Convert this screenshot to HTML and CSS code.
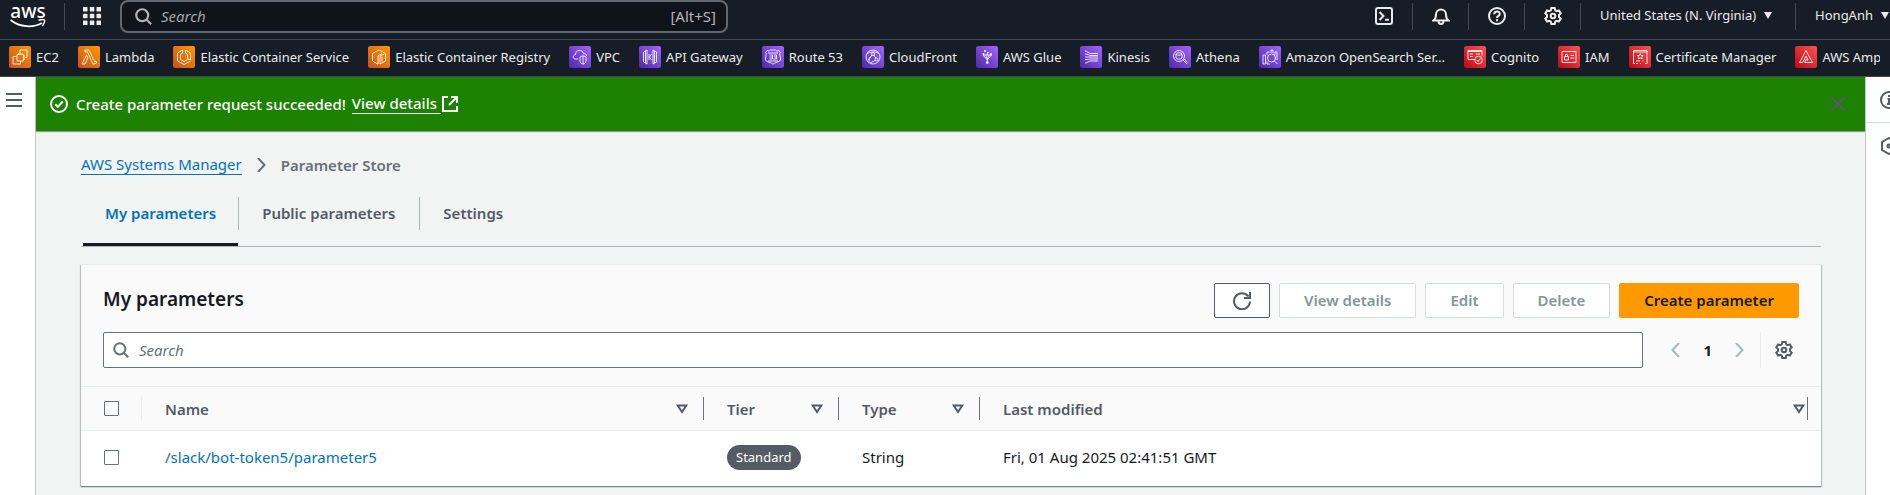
FILE: index.html
```html
<!DOCTYPE html>
<html lang="en">
<head>
<meta charset="utf-8">
<title>Parameter Store - AWS Systems Manager</title>
<link rel="stylesheet" href="styles.css">
</head>
<body>
<svg class="sprite" aria-hidden="true">
  <defs>
    <linearGradient id="orange" x1="0" y1="1" x2="1" y2="0"><stop offset="0" stop-color="#c8511b"/><stop offset="1" stop-color="#ff9900"/></linearGradient>
    <linearGradient id="purple" x1="0" y1="1" x2="1" y2="0"><stop offset="0" stop-color="#4d27a8"/><stop offset="1" stop-color="#a166ff"/></linearGradient>
    <linearGradient id="red" x1="0" y1="1" x2="1" y2="0"><stop offset="0" stop-color="#bd0816"/><stop offset="1" stop-color="#ff5252"/></linearGradient>
  </defs>
  <symbol id="search" viewBox="0 0 16 16"><circle cx="6.800" cy="6.800" r="5.600"/><path d="M10.800 10.800 15.200 15.200"/></symbol>
  <symbol id="gear" viewBox="0 0 18 18"><path d="M7.300 1h3.400l.5 2.300 1.500.9 2.200-.8 1.800 3L15 8v2l1.700 1.600-1.800 3-2.200-.8-1.500.9-.5 2.300H7.300l-.5-2.300-1.500-.9-2.200.8-1.800-3L3 10V8L1.300 6.400l1.800-3 2.200.8 1.500-.9z"/><circle cx="9" cy="9" r="2.300"/></symbol>
  <symbol id="sort" viewBox="0 0 12 10"><path d="M1.700 1.500h8.600L6 8z"/></symbol>
</svg>

<header class="top">
  <div class="bar">
    <a class="logo" href="#" aria-label="AWS home">
      <span class="logo-text">aws</span>
      <svg class="smile" viewBox="0 0 36 9"><path d="M.5 1C10 8.500 23 9 32 4" fill="none" stroke="#fff" stroke-width="1.800"/><path d="M28.500 1.200c3-.8 5.600-.8 6 0s-.4 3.800-2.400 5.800" fill="none" stroke="#fff" stroke-width="1.400"/></svg>
    </a>
    <span class="rule"></span>
    <button class="icon-btn apps" aria-label="Services">
      <svg viewBox="0 0 18 18" width="18" height="18" fill="#ebebf0"><rect width="4.500" height="4.500" rx=".6"/><rect x="6.800" width="4.500" height="4.500" rx=".6"/><rect x="13.500" width="4.500" height="4.500" rx=".6"/><rect y="6.800" width="4.500" height="4.500" rx=".6"/><rect x="6.800" y="6.800" width="4.500" height="4.500" rx=".6"/><rect x="13.500" y="6.800" width="4.500" height="4.500" rx=".6"/><rect y="13.500" width="4.500" height="4.500" rx=".6"/><rect x="6.800" y="13.500" width="4.500" height="4.500" rx=".6"/><rect x="13.500" y="13.500" width="4.500" height="4.500" rx=".6"/></svg>
    </button>
    <label class="global-search">
      <svg class="line" width="17" height="17"><use href="#search"/></svg>
      <input type="search" placeholder="Search" aria-label="Search">
      <span>[Alt+S]</span>
    </label>
    <div class="tools">
      <button class="icon-btn" aria-label="CloudShell"><svg class="line" viewBox="0 0 18 18" width="18" height="18"><rect x="1" y="1" width="16" height="16" rx="2"/><path d="M4.500 5 8.500 9l-4 4M10 12.800h4"/></svg></button>
      <button class="icon-btn" aria-label="Notifications"><svg class="line" viewBox="0 0 18 18" width="18" height="18"><path d="M1.500 13.500c2-1.500 2.500-3 2.500-6a5 5 0 0 1 10 0c0 3 .5 4.500 2.500 6z"/><path d="M6.500 14c0 4 5 4 5 0"/></svg></button>
      <button class="icon-btn" aria-label="Help"><svg class="line" viewBox="0 0 18 18" width="18" height="18"><circle cx="9" cy="9" r="8"/><path d="M6.200 7.200c0-3.600 5.600-3.600 5.600-.2 0 2-2.800 1.800-2.800 4M9 12.300v2"/></svg></button>
      <button class="icon-btn" aria-label="Settings"><svg class="line" width="18" height="18"><use href="#gear"/></svg></button>
      <button class="menu">United States (N. Virginia)<i></i></button>
      <button class="menu">HongAnh<i></i></button>
    </div>
  </div>
  <nav class="favorites" aria-label="Favorites">
    <a href="#"><svg viewBox="0 0 22 22"><rect width="22" height="22" rx="2" fill="url(#orange)"/><path d="M8 8.500h6.500V15H8zM9.500 8.500V7M13 8.500V7M14.500 10H16M14.500 13H16M11 8V4h7v7.500h-2.500M7.500 10.500H4V18h7.500v-3"/></svg>EC2</a>
    <a href="#"><svg viewBox="0 0 22 22"><rect width="22" height="22" rx="2" fill="url(#orange)"/><path d="M7 4h4l5.500 11.500 1.500-.5.700 2-3.700 1.200L9.500 6H7zM8.500 9l1.500 3-3 6H4z"/></svg>Lambda</a>
    <a href="#"><svg viewBox="0 0 22 22"><rect width="22" height="22" rx="2" fill="url(#orange)"/><path d="m9.500 4-5 3v8l6.500 3.500 6-3.200M12.500 4l5 3v7l-3-1.500v-4L12.500 7zM9.500 4v3l-2 1.500v5L11 15.500l3.500-2"/></svg>Elastic Container Service</a>
    <a href="#"><svg viewBox="0 0 22 22"><rect width="22" height="22" rx="2" fill="url(#orange)"/><path d="M10 18.300 4.500 15V7.500L11 4l6.500 3.500V15L12 18V10l4-2M10 18v-8l4-2.500M14 10.500v5"/></svg>Elastic Container Registry</a>
    <a href="#"><svg viewBox="0 0 22 22"><rect width="22" height="22" rx="2" fill="url(#purple)"/><path d="M9 13H6.500C3.500 13 3.500 9 6.500 8.500c0-5 7-5.500 8-1 2 0 3 1 3 2.500M11 11l3-1.300 3 1.300v4c0 1.800-1.500 2.600-3 3.200-1.500-.6-3-1.400-3-3.200zM14 10v8"/></svg>VPC</a>
    <a href="#"><svg viewBox="0 0 22 22"><rect width="22" height="22" rx="2" fill="url(#purple)"/><path d="M4.500 6 8 4v14l-3.500-2zM6.500 5v12M17.500 6 14 4v14l3.500-2zM15.500 5v12M10 8v6M12.500 8l-2 3 2 3"/></svg>API Gateway</a>
    <a href="#"><svg viewBox="0 0 22 22"><rect width="22" height="22" rx="2" fill="url(#purple)"/><path d="M5 4.500c1.500.8 2.700.5 3.500-.5h5c.8 1 2 1.300 3.500.5l1.200 2c-1.500 3 2 6-.5 8.500-1.700 1.500-4.500 1-6.700 3.200-2.200-2.200-5-1.700-6.700-3.200-2.500-2.500 1-5.500-.5-8.500zM6 7h10M7.500 9h3v2h-3M10.500 11v2h-3M11.500 9h3v4h-3M12 11h2.500M6 15h10"/></svg>Route 53</a>
    <a href="#"><svg viewBox="0 0 22 22"><rect width="22" height="22" rx="2" fill="url(#purple)"/><circle cx="11" cy="11" r="7"/><circle cx="11" cy="8" r="1.500"/><circle cx="14.500" cy="13.500" r="1.500"/><path d="m10 9-4 5M12 9l2 3.500M5 8c3-2 7-3 11-1M7 16c0-3 1-5 3-7M8 17l5-2.500"/></svg>CloudFront</a>
    <a href="#"><svg viewBox="0 0 22 22"><rect width="22" height="22" rx="2" fill="url(#purple)"/><path d="M7 9h8.500L11.300 14zM11.300 14v3.500M9.500 9l1.800 4 1.800-4M11.300 9V7"/><g class="dots"><circle cx="9" cy="5" r="1"/><circle cx="12" cy="6.500" r=".8"/><circle cx="7.500" cy="8" r="1"/><circle cx="15" cy="8" r="1"/><circle cx="11.300" cy="16.500" r="1.300"/></g></svg>AWS Glue</a>
    <a href="#"><svg viewBox="0 0 22 22"><rect width="22" height="22" rx="2" fill="url(#purple)"/><path d="M5 5c3 0 3 2.500 6 2.500h7M5 8c3 0 4 1.500 6 1.500h7M5 11h13M5 13.500c3 0 4-.5 6-.5h7M5 17c3 0 3-2 6-2h7"/></svg>Kinesis</a>
    <a href="#"><svg viewBox="0 0 22 22"><rect width="22" height="22" rx="2" fill="url(#purple)"/><circle cx="10" cy="10" r="5.500"/><ellipse cx="10" cy="8" rx="3" ry="1.200"/><path d="M7 8v4c1 1.500 5 1.500 6 0V8M14 14l4 4M15 13l3.500 3.500"/></svg>Athena</a>
    <a href="#"><svg viewBox="0 0 22 22"><rect width="22" height="22" rx="2" fill="url(#purple)"/><circle cx="12.500" cy="12" r="4"/><path d="m15.500 15 3 3M4 9h2.500v9H4zM8 15v3h3M8 9V6h2.500M12 7V4h2v3M16 9V6h2v8"/></svg>Amazon OpenSearch Ser…</a>
    <a href="#"><svg viewBox="0 0 22 22"><rect width="22" height="22" rx="2" fill="url(#red)"/><path d="M11 13.500H4V4.500h14v5M6 8h3M6 10.500h3M12 8h4M4 4.500v1h14"/><circle cx="14.500" cy="14" r="3.800"/><path d="m12.800 14 1.300 1.500 2.400-3"/></svg>Cognito</a>
    <a href="#"><svg viewBox="0 0 22 22"><rect width="22" height="22" rx="2" fill="url(#red)"/><path d="M4 5.500h14v11H4zM6.500 10.500h4v3.500h-4zM7.500 10.500v-2h2v2M12.500 9.500H16M12.500 12H16"/></svg>IAM</a>
    <a href="#"><svg viewBox="0 0 22 22"><rect width="22" height="22" rx="2" fill="url(#red)"/><path d="M6 17.500H4.500v-13h13.500v13h-2M4.500 6H18M7 15h4M7 17.500h2M11 17.500h1M13.500 15h1M11.300 7.500l.9 2h2l-1.500 1.500.5 2-1.900-1-1.900 1 .5-2-1.500-1.500h2z"/></svg>Certificate Manager</a>
    <a href="#"><svg viewBox="0 0 22 22"><rect width="22" height="22" rx="2" fill="url(#red)"/><path d="M11 4.500 4.500 16.500h3L11 10l2 4h-2.500M11 4.500l6.500 12h-8L11 13.500"/></svg><span class="clip">AWS Amplify</span></a>
  </nav>
</header>

<div class="shell">
  <aside class="left-rail"><button class="icon-btn" aria-label="Open navigation"><svg viewBox="0 0 16 14" width="16" height="14" stroke="#545b64" stroke-width="2"><path d="M0 1h16M0 7h16M0 13h16"/></svg></button></aside>

  <div class="page">
    <div class="flash" role="status">
      <svg class="line" viewBox="0 0 18 18" width="18" height="18"><circle cx="9" cy="9" r="8"/><path d="m5.300 9.300 2.600 2.500L12.700 6.500"/></svg>
      <span>Create parameter request succeeded!</span>
      <a href="#"><span class="underlined">View details</span><svg class="line" viewBox="0 0 16 16" width="16" height="16"><path d="M6 1H1v14h14v-5M9 1h6v6M15 1 7 9"/></svg></a>
      <button class="icon-btn close" aria-label="Dismiss"><svg viewBox="0 0 14 14" width="14" height="14" fill="none" stroke="#545b64" stroke-width="2"><path d="m0 0 14 14M14 0 0 14"/></svg></button>
    </div>

    <main>
      <nav class="crumbs" aria-label="Breadcrumb">
        <a href="#">AWS Systems Manager</a>
        <svg viewBox="0 0 9 14" width="9" height="14" fill="none" stroke="#687078" stroke-width="2"><path d="m1 0 6.500 7L1 14"/></svg>
        <span>Parameter Store</span>
      </nav>

      <div class="tabs" role="tablist">
        <button role="tab" aria-selected="true">My parameters</button>
        <button role="tab" aria-selected="false">Public parameters</button>
        <button role="tab" aria-selected="false">Settings</button>
      </div>

      <section class="card">
        <div class="card-head">
          <h2>My parameters</h2>
          <div class="actions">
            <button class="btn refresh" aria-label="Refresh"><svg viewBox="0 0 18 18" width="18" height="18" fill="none" stroke="#545b64" stroke-width="2"><path d="M17 9.500A8 8 0 1 1 15.500 4.500M17 0v6h-6"/></svg></button>
            <button class="btn" disabled>View details</button>
            <button class="btn" disabled>Edit</button>
            <button class="btn" disabled>Delete</button>
            <button class="btn primary">Create parameter</button>
          </div>
        </div>
        <div class="filter">
          <label class="search">
            <svg class="line" width="16" height="16"><use href="#search"/></svg>
            <input type="search" placeholder="Search" aria-label="Search parameters">
          </label>
          <div class="pager">
            <button class="icon-btn" aria-label="Previous page"><svg viewBox="0 0 9 14" width="9" height="14"><path d="M8 0 1.500 7 8 14"/></svg></button>
            <b>1</b>
            <button class="icon-btn" aria-label="Next page"><svg viewBox="0 0 9 14" width="9" height="14"><path d="m1 0 6.500 7L1 14"/></svg></button>
          </div>
          <button class="icon-btn prefs" aria-label="Preferences"><svg class="line" width="18" height="18"><use href="#gear"/></svg></button>
        </div>
        <table>
          <colgroup><col class="c-check"><col class="c-name"><col class="c-tier"><col class="c-type"><col></colgroup>
          <thead>
            <tr>
              <th><div class="th"><input type="checkbox" aria-label="Select all"></div></th>
              <th><div class="th">Name<svg class="line"><use href="#sort"/></svg></div></th>
              <th><div class="th">Tier<svg class="line"><use href="#sort"/></svg></div></th>
              <th><div class="th">Type<svg class="line"><use href="#sort"/></svg></div></th>
              <th><div class="th">Last modified<svg class="line"><use href="#sort"/></svg></div></th>
            </tr>
          </thead>
          <tbody>
            <tr>
              <td><input type="checkbox" aria-label="Select /slack/bot-token5/parameter5"></td>
              <td><a href="#">/slack/bot-token5/parameter5</a></td>
              <td><span class="badge">Standard</span></td>
              <td>String</td>
              <td>Fri, 01 Aug 2025 02:41:51 GMT</td>
            </tr>
          </tbody>
        </table>
      </section>
    </main>
  </div>

  <aside class="right-rail">
    <button class="icon-btn" aria-label="Info"><svg class="line" viewBox="0 0 18 18" width="18" height="18"><circle cx="9" cy="9" r="8"/><path d="M7.500 8H9v5M9 4v2M7 13h4"/></svg></button>
    <button class="icon-btn" aria-label="Tools"><svg class="line" viewBox="0 0 18 18" width="18" height="18"><path d="m9 1 7 4v8l-7 4-7-4V5z"/><circle cx="9" cy="9" r="1.500"/></svg></button>
  </aside>
</div>
</body>
</html>
```
FILE: styles.css
```css
* { box-sizing: border-box; }

body {
  margin: 0;
  min-height: 100vh;
  display: flex;
  flex-direction: column;
  overflow: hidden;
  background: #fff;
  color: #16191f;
  font: 15px/20px "Noto Sans", "Open Sans", sans-serif;
}

button, input { font: inherit; color: inherit; }
button { padding: 0; border: 0; background: none; white-space: nowrap; }
svg { display: block; flex: none; }
.sprite { position: absolute; width: 0; height: 0; }
.line { fill: none; stroke: currentColor; stroke-width: 2; }
.icon-btn { display: flex; align-items: center; justify-content: center; }

input[type="search"] {
  flex: 1;
  min-width: 0;
  padding: 0;
  border: 0;
  outline: 0;
  background: none;
  appearance: none;
}
input::placeholder { color: #687078; font-style: italic; opacity: 1; }

/* Global header */
.top { background: #161d26; color: #ebebf0; overflow: hidden; }
.bar { display: flex; height: 40px; border-bottom: 1px solid #424650; padding: 0 0 7px 10px; align-items: center; }
.logo { width: 36px; color: #fff; text-decoration: none; }
.logo-text { display: block; text-align: center; font: 500 19px/15px "Noto Sans", sans-serif; }
.smile { width: 36px; height: 9px; }
.rule { width: 1px; height: 27px; margin: 0 18px; background: #424650; }
.apps { margin-right: 19px; }
.global-search {
  display: flex;
  align-items: center;
  gap: 9px;
  width: 608px;
  height: 33px;
  padding: 0 10px 0 13px;
  border: 2px solid #656871;
  border-radius: 8px;
  background: #0f141a;
  color: #b4b4bb;
}
.global-search input::placeholder { color: #a4a4ad; }
.tools { display: flex; align-items: center; margin: 0 -6px 0 auto; }
.tools > * { height: 27px; }
.tools > * + * { border-left: 1px solid #424650; }
.tools .icon-btn { width: 56px; }
.menu { display: flex; align-items: center; gap: 8px; padding: 0 23px 2px 19px; font-size: 13px; }
.menu:last-child { padding-right: 7px; }
.menu i { border: 4px solid transparent; border-top: 7px solid #ebebf0; border-bottom: 0; }

.favorites { display: flex; gap: 19px; height: 37px; padding: 0 10px 2px 9px; align-items: center; border-bottom: 1px solid #424650; }
.favorites a { display: flex; align-items: center; gap: 5px; color: inherit; font-size: 13px; text-decoration: none; white-space: nowrap; }
.favorites a:last-child { flex: 1; min-width: 0; }
.favorites svg { width: 22px; height: 22px; fill: none; stroke: #ffffffd9; stroke-width: 1; }
.favorites rect { stroke: none; }
.favorites .dots { fill: #fff; stroke: none; }
.clip { min-width: 0; overflow: hidden; }

/* Page frame */
.shell { flex: 1; display: flex; }
.left-rail { width: 36px; padding: 16px 0 0 6px; border-right: 1px solid #c6cacc; }
.right-rail { width: 25px; border-left: 1px solid #c6cacc; color: #545b64; overflow: hidden; }
.right-rail .icon-btn { width: 45px; height: 46px; border-bottom: 1px solid #d5dbdb; }
.right-rail .icon-btn + .icon-btn { border: 0; }
.page { flex: 1; min-width: 0; background: #f2f3f3; }

.flash {
  display: flex;
  align-items: center;
  height: 54px;
  padding: 0 20px 0 14px;
  background: #1d8102;
  box-shadow: 0 1px 1px #8d9990;
  color: #fff;
  font-weight: 500;
}
.flash > span { margin: 0 6px 0 8px; }
.flash a { display: flex; align-items: center; gap: 1px; color: inherit; text-decoration: none; }
.underlined { padding-right: 4px; border-bottom: 1px solid; line-height: 19px; }
.close { margin-left: auto; }

main { padding: 23px 44px 0 45px; }
.crumbs { display: flex; align-items: center; gap: 15px; color: #687078; font-weight: 600; }
.crumbs a { border-bottom: 1px solid; color: #0073bb; font-weight: 400; text-decoration: none; }

.tabs { display: flex; margin-top: 21px; border-bottom: 1px solid #aab7b8; }
.tabs button { height: 50px; padding: 0 24px 16px; color: #545b64; font-weight: 600; }
.tabs button + button { background: linear-gradient(#aab7b8, #aab7b8) 0 1px / 1px 33px no-repeat; }
.tabs button[aria-selected="true"] { margin-left: 2px; padding: 0 22px 13px; border-bottom: 3px solid #16191f; color: #0073bb; }

.card { margin-top: 17px; border-top: 1px solid #eaeded; background: #fafafa; box-shadow: 0 1px 1px #7d8688, 1px 1px 1px #c3c9ca, -1px 1px 1px #c3c9ca; }
.card-head { display: flex; align-items: center; justify-content: space-between; padding: 18px 22px 14px; }
h2 { margin: 0; padding-bottom: 4px; font-size: 19px; line-height: 24px; font-weight: 600; }
.actions { display: flex; gap: 9px; }
.btn { height: 35px; padding: 0 24px 2px; border: 1px solid #d5dbdb; border-radius: 2px; background: #fff; color: #879596; font-weight: 600; }
.refresh { padding: 0 18px; border-color: #545b64; }
.primary { border-color: #ff9900; background: #ff9900; color: #16191f; }

.filter { display: flex; align-items: center; padding: 0 22px 18px; }
.search { flex: 1; display: flex; align-items: center; gap: 10px; height: 36px; padding: 0 9px; border: 1px solid #687078; border-radius: 2px; background: #fff; color: #687078; }
.pager { display: flex; align-items: center; gap: 23px; height: 36px; margin-left: 28px; padding-right: 16px; border-right: 1px solid #eaeded; }
.pager svg { fill: none; stroke: #aab7b8; stroke-width: 2; }
.prefs { width: 18px; margin: 0 6px 0 14px; color: #545b64; }

table { width: 100%; border-collapse: collapse; table-layout: fixed; }
.c-check { width: 61px; }
.c-name { width: 562px; }
.c-tier { width: 135px; }
.c-type { width: 141px; }
th { height: 44px; padding: 0; border: solid #eaeded; border-width: 1px 0; color: #545b64; font-weight: 600; text-align: left; }
.th { display: flex; align-items: center; justify-content: space-between; height: 23px; padding: 0 15px 0 23px; border-right: 1px solid #687078; }
.th svg { width: 12px; height: 10px; }
th:first-child .th { border-color: #eaeded; }
th:last-child .th { margin-right: 13px; padding-right: 2px; }
td { height: 55px; padding: 0 23px 2px; background: #fff; }
td a { color: #0073bb; text-decoration: none; }
input[type="checkbox"] { display: block; width: 15px; height: 15px; margin: 0; border: 1px solid #687078; border-radius: 1px; background: #fff; appearance: none; }
.badge { display: inline-block; padding: 2px 9px 3px; border-radius: 13px; background: #545b64; color: #fff; font-size: 13px; vertical-align: middle; }
```
